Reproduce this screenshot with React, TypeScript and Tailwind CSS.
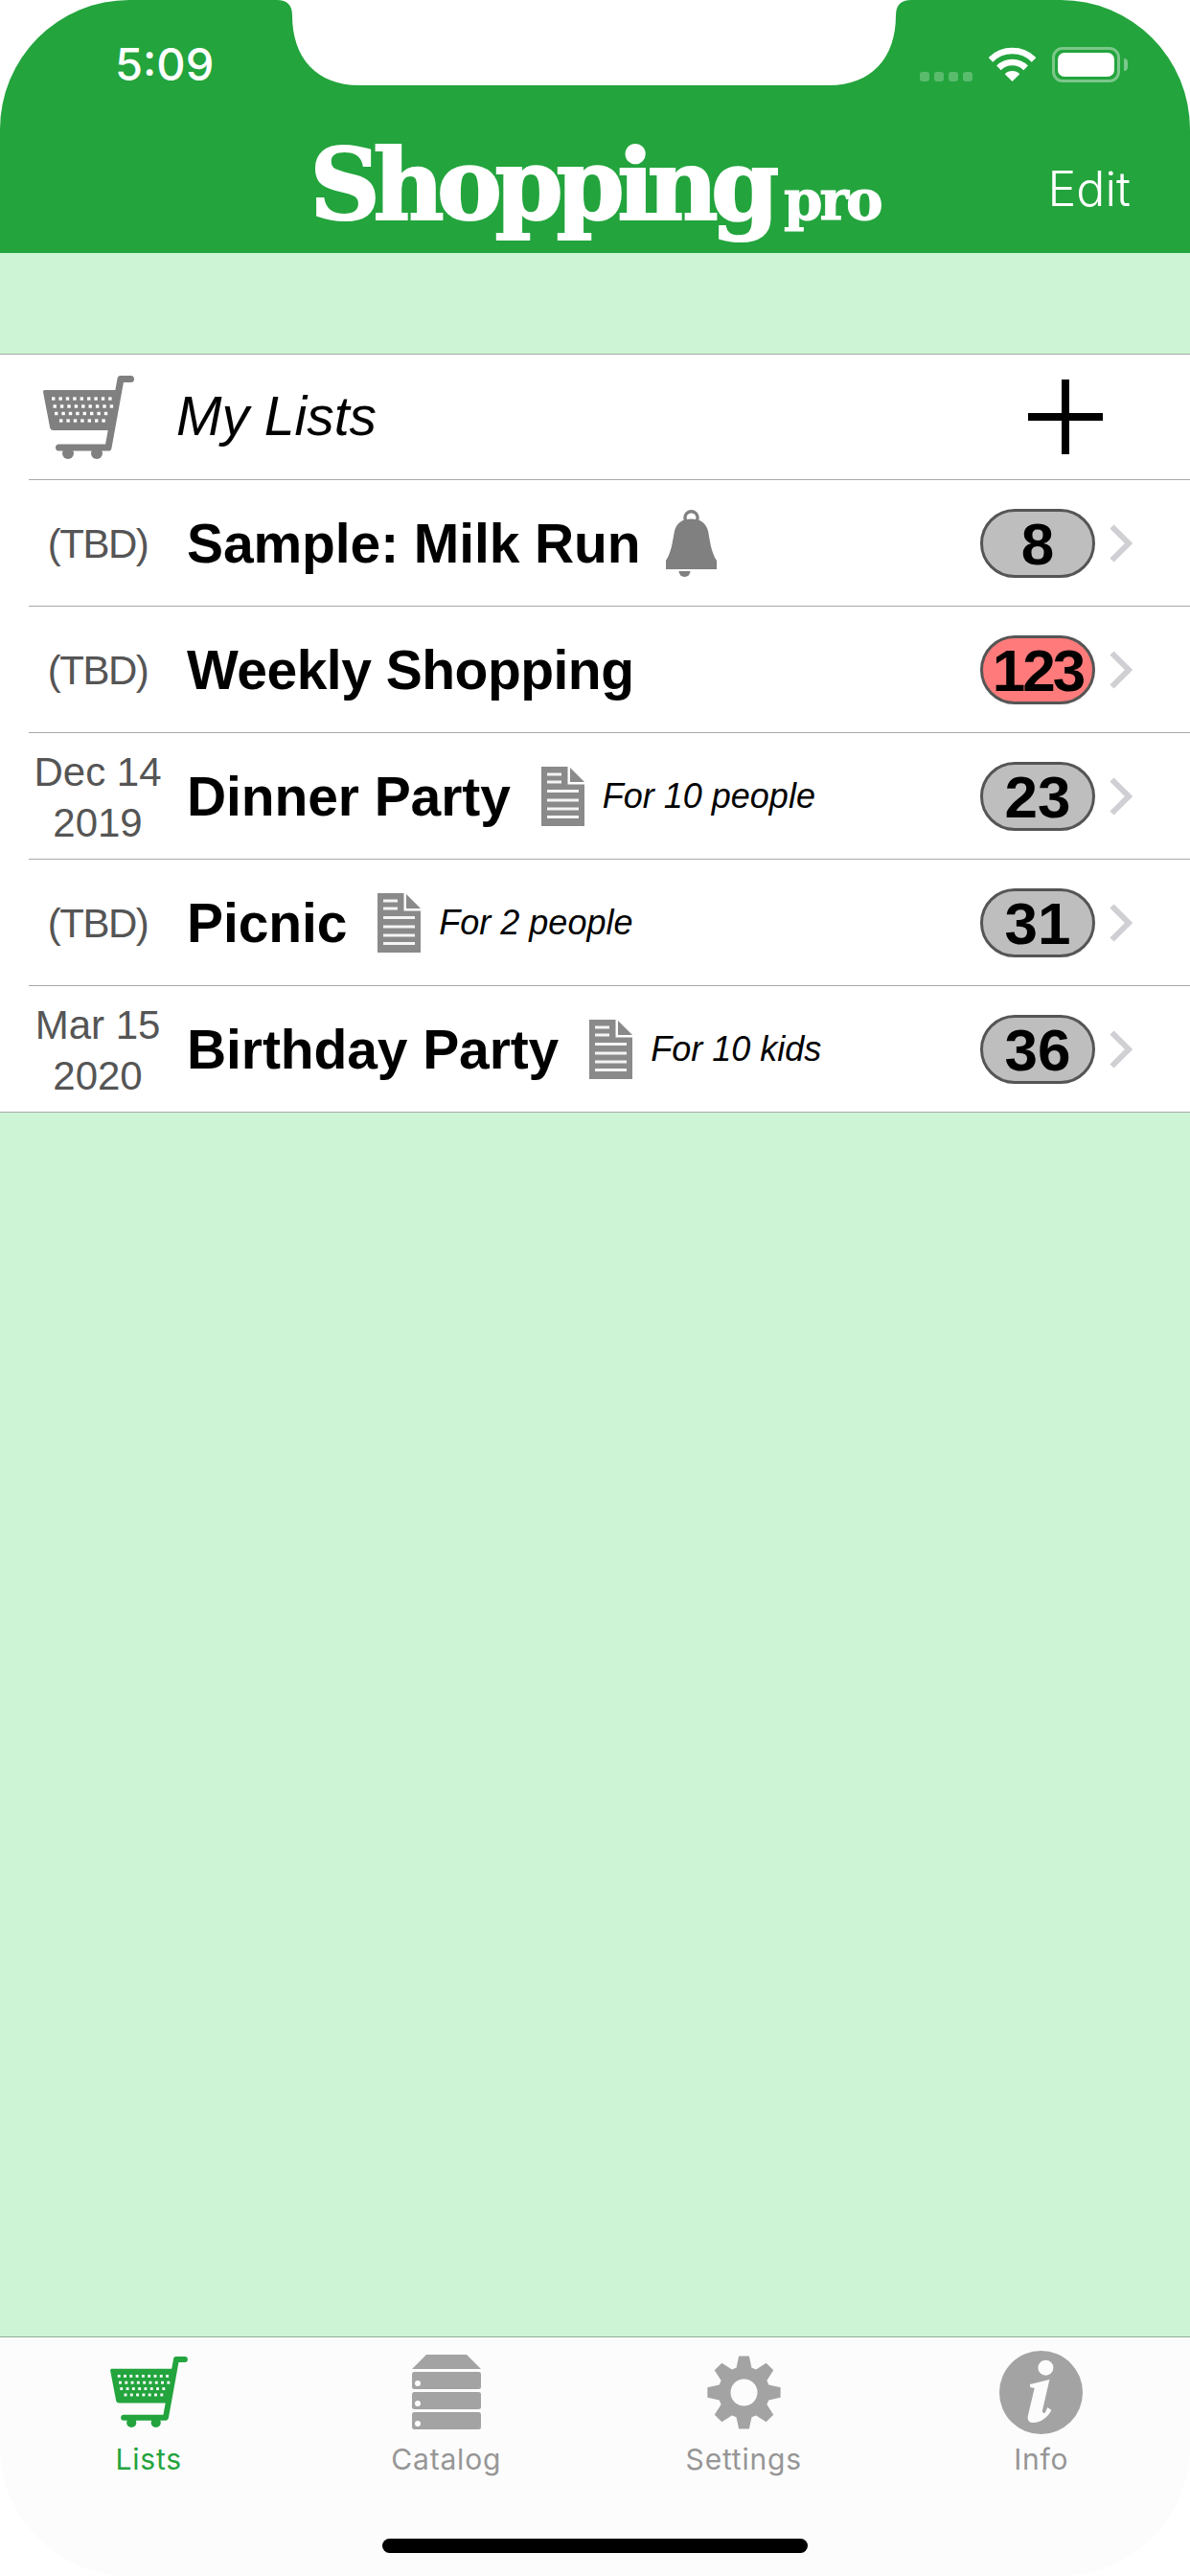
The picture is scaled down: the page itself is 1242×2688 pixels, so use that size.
import React from 'react';

const SANS = 'font-["Liberation_Sans",Arial,sans-serif]';

const lists = [
  { date: ['(TBD)'], name: 'Sample: Milk Run', bell: true, count: 8 },
  { date: ['(TBD)'], name: 'Weekly Shopping', count: 123, alert: true },
  { date: ['Dec 14', '2019'], name: 'Dinner Party', note: 'For 10 people', count: 23 },
  { date: ['(TBD)'], name: 'Picnic', note: 'For 2 people', count: 31 },
  { date: ['Mar 15', '2020'], name: 'Birthday Party', note: 'For 10 kids', count: 36 },
];

// gear outline, 8 teeth, one pointing straight up
const gearPath = () => {
  const pts: string[] = [];
  const pt = (r: number, a: number) => `${(38.5 + r * Math.sin(a)).toFixed(2)} ${(38.5 - r * Math.cos(a)).toFixed(2)}`;
  for (let i = 0; i < 8; i++) {
    const a = (i * Math.PI) / 4;
    pts.push(pt(27, a - 0.3), pt(38.5, a - 0.14), pt(38.5, a + 0.14), pt(27, a + 0.3));
  }
  return `M${pts.join('L')}Z`;
};

const CartIcon = ({ className, color, hole }: { className: string; color: string; hole: string }) => {
  const rows = [
    { y: 24, from: 9, n: 9 },
    { y: 32, from: 10.5, n: 9 },
    { y: 39.5, from: 12, n: 8 },
    { y: 47, from: 17, n: 7 },
  ];
  return (
    <svg viewBox="0 0 95 87" className={className}>
      <path d="M1.5 15H77L70 57H11a4 4 0 0 1-4-3.5L0 17q0-2 1.5-2Z" fill={color} />
      <path d="M81 3.5H91.5M81 3.5 68 75H16.5" stroke={color} strokeWidth="7" strokeLinecap="round" strokeLinejoin="round" fill="none" />
      <circle cx="26" cy="81" r="6" fill={color} />
      <circle cx="56" cy="81" r="6" fill={color} />
      {rows.map((r) =>
        Array.from({ length: r.n }).map((_, i) => (
          <rect key={`${r.y}-${i}`} x={r.from + i * 7.4} y={r.y - 1.7} width="3.4" height="3.4" fill={hole} />
        )),
      )}
    </svg>
  );
};

const DocIcon = () => (
  <svg viewBox="0 0 45 62" className="w-[45px] h-[62px] shrink-0">
    <path d="M0 0H27.500V18.500H45V62H0Z" fill="#8a8a8a" />
    <path d="M30 1 45 16H30Z" fill="#8a8a8a" />
    <path d="M6 8H21M6 16H21M6 25.500H39M6 35H39M6 44H39M6 52.500H39" stroke="#f4f4f4" strokeWidth="3" fill="none" />
  </svg>
);

const BellIcon = () => (
  <svg viewBox="0 0 53 70" className="w-[53px] h-[70px] shrink-0">
    <circle cx="26.500" cy="8.300" r="6.600" stroke="#808080" strokeWidth="3.400" fill="none" />
    <path d="M26.500 9.500C36 9.500 42 14 44 22 46 32 47 44 53 53V62H0V53C6 44 7 32 9 22 11 14 17 9.500 26.500 9.500Z" fill="#808080" />
    <path d="M13.500 64H25.500A6 6 0 0 1 13.500 64Z" fill="#808080" />
  </svg>
);

const Row = ({ item }: { item: (typeof lists)[number] }) => (
  <div className="flex items-center h-[132px] ml-[30px] border-b border-[#a8a8a8] last:ml-0 last:pl-[30px]">
    <div className={`w-[144px] shrink-0 mt-[2px] text-center text-[42px] leading-[53px] text-[#555555] ${SANS}`}>
      {item.date.map((d) => (
        <div key={d} className={d === '(TBD)' ? 'tracking-[-1.500px]' : ''}>
          {d}
        </div>
      ))}
    </div>
    <div className={`ml-[21px] mt-[2px] text-[57px] leading-none font-bold text-black whitespace-nowrap ${SANS} ${item.alert ? 'tracking-[-0.500px]' : 'tracking-[-0.100px]'}`}>
      {item.name}
    </div>
    {item.bell && (
      <div className="ml-[27px]">
        <BellIcon />
      </div>
    )}
    {item.note && (
      <div className="flex items-center ml-[32px]">
        <DocIcon />
        <span className={`ml-[19px] text-[36px] italic text-black whitespace-nowrap ${SANS}`}>{item.note}</span>
      </div>
    )}
    <div className="ml-auto mr-[60px] flex items-center">
      <div
        className={`w-[120px] h-[72px] pt-[2px] rounded-full border-[3px] border-[#555555] flex items-center justify-center text-[62px] font-bold text-black ${SANS} ${
          item.alert ? 'bg-[#ff7b7b] tracking-[-3px]' : 'bg-[#bebebe]'
        }`}
      >
        {item.count}
      </div>
      <svg viewBox="0 0 24 40" className="ml-[15px] w-[24px] h-[40px]">
        <path d="M2.500 2.500 20 20 2.500 37.500" stroke="#cfcfd4" strokeWidth="6" fill="none" />
      </svg>
    </div>
  </div>
);

const TabItem = ({ label, active, children }: { label: string; active?: boolean; children: React.ReactNode }) => (
  <div className="flex flex-col items-center">
    <div className="h-[92px] flex items-center justify-center">{children}</div>
    <div className={`mt-[6px] text-[30px] leading-[36px] tracking-[0.800px] font-['Inter',sans-serif] ${active ? 'text-[#23a43d]' : 'text-[#969696]'}`}>
      {label}
    </div>
  </div>
);

export default function App() {
  return (
    <div className="relative w-[1242px] h-[2688px] flex flex-col overflow-hidden bg-white">
      <header className="h-[264px] shrink-0 bg-[#23a43d] rounded-t-[135px] text-white">
        <div className="flex items-start h-[90px] font-['Inter',sans-serif]">
          <div className="ml-[120px] mt-[37px] text-[47px] leading-[60px] font-medium">5:09</div>
          <div className="ml-auto mr-[65px] mt-[49px] flex items-start">
            <div className="flex gap-[5px] mt-[26px]">
              {[0, 1, 2, 3].map((i) => (
                <div key={i} className="w-[10px] h-[10px] rounded-[3px] bg-white/25" />
              ))}
            </div>
            <svg viewBox="0 0 49 36" className="ml-[17px] w-[49px] h-[36px]">
              <path d="M1.900 13.400A32 32 0 0 1 47.100 13.400M10.400 21.900A20 20 0 0 1 38.600 21.900" stroke="#fff" strokeWidth="6.500" fill="none" />
              <path d="M24.500 36 16.700 28.200A11 11 0 0 1 32.300 28.200Z" fill="#fff" />
            </svg>
            <div className="ml-[17px] w-[71px] h-[37px] rounded-[11px] border-[3px] border-white/40 p-[3px]">
              <div className="w-full h-full rounded-[7px] bg-white" />
            </div>
            <div className="ml-[4px] mt-[12px] w-[4px] h-[13px] rounded-r-[4px] bg-white/40" />
          </div>
        </div>
        <div className="grid grid-cols-[1fr_auto_1fr] items-center h-[174px] pt-[40px]">
          <div />
          <div className="flex items-baseline -mt-[8px] font-['DejaVu_Serif',serif] font-bold whitespace-nowrap">
            <span className="text-[102px] leading-none tracking-[-7.500px] [-webkit-text-stroke:2px_white]">Shopping</span>
            <span className="ml-[12px] text-[58px] leading-none tracking-[-3px] [-webkit-text-stroke:1px_white]">pro</span>
          </div>
          <div className="justify-self-end mr-[62px] text-[50px] leading-none font-light font-['Inter',sans-serif]">Edit</div>
        </div>
      </header>

      {/* notch */}
      <svg viewBox="0 0 662 89" className="absolute left-[289px] top-0 w-[662px] h-[89px]">
        <path d="M0 0Q16 0 16 16C16 60 41 89 86 89H576C621 89 646 60 646 16Q646 0 662 0Z" fill="#fff" />
      </svg>

      <main className="flex-1 bg-[#cdf5d5] pt-[105px]">
        <div className="bg-white border-t border-[#a8a8a8]">
          <div className="flex items-center h-[131px] border-b border-[#a8a8a8] ml-[30px]">
            <div className="ml-[15px]">
              <CartIcon className="w-[95px] h-[87px]" color="#808080" hole="#ffffff" />
            </div>
            <div className={`ml-[44px] text-[57px] italic text-black ${SANS}`}>My Lists</div>
            <svg viewBox="0 0 78 78" className="ml-auto mr-[91px] w-[78px] h-[78px]">
              <path d="M39 0V78M0 39H78" stroke="#000" strokeWidth="8" fill="none" />
            </svg>
          </div>
          {lists.map((item) => (
            <Row key={item.name} item={item} />
          ))}
        </div>
      </main>

      <nav className="relative h-[250px] shrink-0 bg-[#fcfcfc] border-t border-[#8fae96] rounded-b-[135px]">
        <div className="grid grid-cols-4 pt-[11px]">
          <TabItem label="Lists" active>
            <CartIcon className="w-[81px] h-[74px]" color="#23a43d" hole="#fcfcfc" />
          </TabItem>
          <TabItem label="Catalog">
            <svg viewBox="0 0 72 78" className="w-[72px] h-[78px]">
              <path d="M15 0H57L72 15H0Z" fill="#a3a3a3" />
              <rect y="18" width="72" height="18" rx="2.500" fill="#a3a3a3" />
              <rect y="39" width="72" height="18" rx="2.500" fill="#a3a3a3" />
              <rect y="60" width="72" height="18" rx="2.500" fill="#a3a3a3" />
              <circle cx="6" cy="30" r="3" fill="#fcfcfc" />
              <circle cx="6" cy="51" r="3" fill="#fcfcfc" />
              <circle cx="6" cy="72" r="3" fill="#fcfcfc" />
            </svg>
          </TabItem>
          <TabItem label="Settings">
            <svg viewBox="0 0 77 77" className="w-[77px] h-[77px]">
              <path d={gearPath()} fill="#a3a3a3" />
              <circle cx="38.500" cy="38.500" r="14" fill="#fcfcfc" />
            </svg>
          </TabItem>
          <TabItem label="Info">
            <svg viewBox="0 0 87 87" className="w-[87px] h-[87px]">
              <circle cx="43.500" cy="43.500" r="43.500" fill="#a3a3a3" />
              <circle cx="48.400" cy="17.700" r="8" fill="#fcfcfc" />
              <path d="M32 35 52.400 30 44.800 63Q45.500 65.500 47.600 65L50.400 59 54.400 62C50 70 42 76 33.700 75 30 74 29.300 71 29.800 68L36.700 39 32.200 38Z" fill="#fcfcfc" />
            </svg>
          </TabItem>
        </div>
        <div className="absolute left-[399px] bottom-[24px] w-[444px] h-[15px] rounded-full bg-black" />
      </nav>
    </div>
  );
}
